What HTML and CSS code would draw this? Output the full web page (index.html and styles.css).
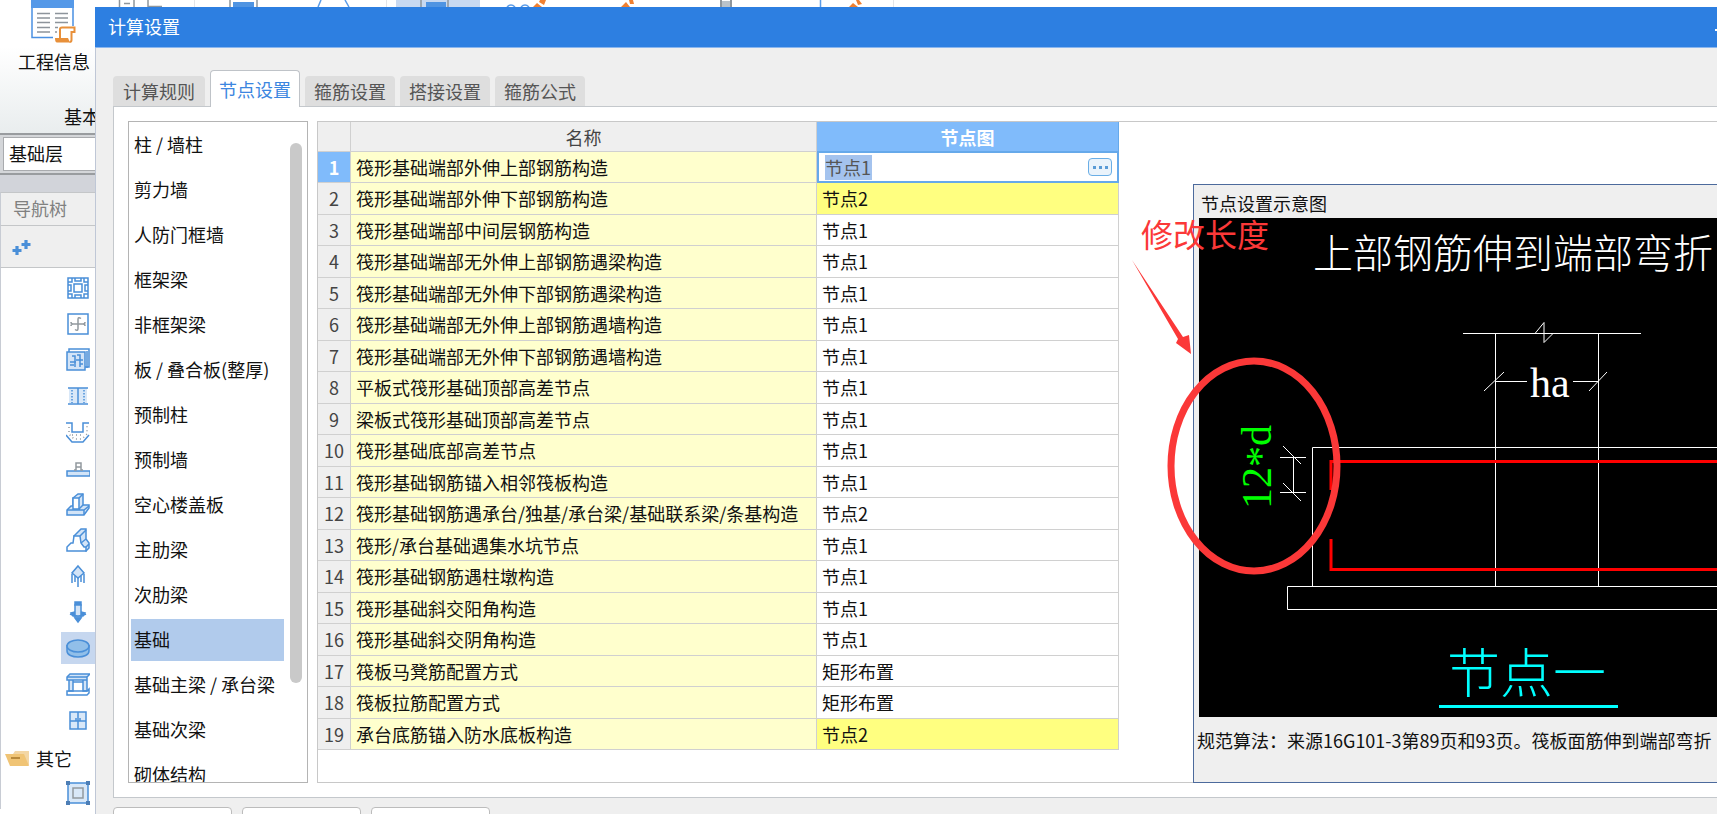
FILE: index.html
```html
<!DOCTYPE html>
<html lang="zh-CN">
<head>
<meta charset="utf-8">
<title>计算设置</title>
<link rel="stylesheet" href="styles.css">
</head>
<body>
<div class="app">
  <aside class="sidebar">
    <div class="ribbon">
      <button class="ribbon-btn" type="button">
        <svg width="46" height="44" viewBox="0 0 46 44" fill="none">
          <path d="M1 0V37.500H22M42 26V0" stroke="#4a90e2" stroke-width="1.500"/>
          <rect x="0" y="0" width="43" height="8" fill="#5599e8"/>
          <path d="M6 13.500h13M6 18h13M6 22.500h13M6 27.500h13M6 32h13M24 13.500h13M24 18h13M24 22.500h13M24 27.500h3M24 32h2" stroke="#8d949b" stroke-width="1.500"/>
          <path d="M29 39V29q0-1.500 2-1.500h12.500V32H40.500v8q0 2-2 2" stroke="#e8903a" stroke-width="2"/>
          <path d="M24 38h13l2 4.500H26q-2 0-2-4.500z" fill="#e8903a"/>
        </svg>
        <span>工程信息</span>
      </button>
      <div class="ribbon-group">基本</div>
    </div>
    <div class="floor-bar">
      <select class="floor-select" aria-label="楼层"><option>基础层</option></select>
    </div>
    <div class="spacer-bar"></div>
    <h2 class="nav-title">导航树</h2>
    <div class="nav-tools">
      <button class="plain" type="button" aria-label="展开">
        <svg width="20" height="18" viewBox="0 0 20 18"><path d="M5 7v9M0.500 11.500h9M14 1v9M9.500 5.500h9" stroke="#4a8fd8" stroke-width="3.200"/></svg>
      </button>
    </div>
    <nav class="tree" aria-label="构件">
      <button class="tree-item" type="button" aria-label="筏板"><svg class="ico" viewBox="0 0 24 24"><path d="M2 2h20v20H2zM8 8h8v8H8zM6 2v4H2M18 2v4h4M6 22v-4H2M18 22v-4h4M2 9h3v6H2M22 9h-3v6h3M9 2v3h6V2M9 22v-3h6v3"/></svg></button>
      <button class="tree-item" type="button" aria-label="筏板主筋"><svg class="ico" viewBox="0 0 24 24"><path d="M2 2h20v20H2z"/><path class="g" d="M15 6.500q-3-2-3 1v9q0 3-3 1M5 10q0 2 2 2h10q2 0 2 2M5 14q0-2 2-2M19 10q0 2-2 2"/></svg></button>
      <button class="tree-item" type="button" aria-label="筏板负筋"><svg class="ico" viewBox="0 0 24 24"><path class="f" d="M1 4h18v18H1z"/><path d="M3 4V1h20v18h-4M21 3v17M6 8h3v11M4 14h6M4 17h4M11 7h3v12M10 12h7M14 16h3"/></svg></button>
      <button class="tree-item" type="button" aria-label="基础板带"><svg class="ico" viewBox="0 0 24 24"><path class="f0" d="M3 4h18v15H3z"/><path d="M2 4h20M2 20h20M12 4v16"/><path stroke-dasharray="1.500 1.500" d="M6 6v13M18 6v13"/></svg></button>
      <button class="tree-item" type="button" aria-label="集水坑"><svg class="ico" viewBox="0 0 24 24"><path d="M0 3h6v9h11V3h6M0 15l6 7h11l6-7"/><path class="g" stroke-dasharray="1 3" d="M3 7v7l5 5h8l5-5V6M6 15h12"/></svg></button>
      <button class="tree-item" type="button" aria-label="柱墩"><svg class="ico" viewBox="0 0 24 24"><path class="f" d="M1 15h23v5H1z"/><path class="g" d="M8 14h2v-3h5v3h2M10 11V7h5v4"/></svg></button>
      <button class="tree-item" type="button" aria-label="独立基础"><svg class="ico" viewBox="0 0 24 24"><path class="f" d="M1 18l4-4h2V6l5-4h5v11h6v3l-5 7H1z"/><path class="w" d="M7 6h6v11H7z"/><path d="M1 18h17v5M18 18l5-4M13 6l4-4M13 17l4-4"/></svg></button>
      <button class="tree-item" type="button" aria-label="条形基础"><svg class="ico" viewBox="0 0 24 24"><path class="f" d="M8 8l7-7h5v10l3 4v5l-3 3z"/><path class="w" d="M1 23v-4l4-4h2l1-7h6l1 7 3 4h2v4z"/><path d="M14 8l6-6M15 15l5-4M20 19l3-3"/></svg></button>
      <button class="tree-item" type="button" aria-label="桩承台"><svg class="ico" viewBox="0 0 24 24"><path class="f" d="M12 2l6 7-6 5-6-5z"/><path d="M12 14v9M6 10v9M18 10v9M9 12v6M15 12v6"/></svg></button>
      <button class="tree-item" type="button" aria-label="桩"><svg class="ico" viewBox="0 0 24 24"><path class="s" d="M9 2h6v3H9zM5 13l4-1v4H7zM19 13l-4-1v4h2zM9 18h6l-3 4z"/><path class="f" d="M9 5h6v12H9z"/><path d="M4 14q8 4 16 0"/></svg></button>
      <button class="tree-item selected" type="button" aria-label="垫层"><svg class="ico" viewBox="0 0 24 24"><path class="d" d="M1 9v6c0 8 22 8 22 0V9"/><ellipse class="d" cx="12" cy="10" rx="11" ry="6"/></svg></button>
      <button class="tree-item" type="button" aria-label="地沟"><svg class="ico" viewBox="0 0 24 24"><path class="f" d="M1 5l3-3h20l-3 3v3H1zM3 8h4v11H3zM17 8h4v11h-4z"/><path d="M1 19h20l2-2v4l-2 2H1zM1 5h20M7 10h10"/></svg></button>
      <button class="tree-item" type="button" aria-label="砖胎膜"><svg class="ico" viewBox="0 0 24 24"><path class="f0" d="M4 4h16v17H4z"/><path d="M4 4h16v17H4zM12 4v17M4 13h16M10 10v3M14 10v3"/></svg></button>
      <div class="tree-folder">
        <svg width="26" height="20" viewBox="0 0 26 20"><path d="M8 6l2-3h14v14h-4z" fill="#f3d6a4"/><path d="M0 6h19l5 12H5z" fill="#f0c475"/><path d="M6 10h9" stroke="#b98a3c" stroke-width="2"/></svg>
        <span>其它</span>
      </div>
      <button class="tree-item" type="button" aria-label="建筑面积"><svg class="ico" viewBox="0 0 24 24"><path class="f0" d="M2 2h20v20H2z"/><path d="M2 2h20v20H2z"/><path class="g" d="M7 7h10v10H7z"/><path class="n" d="M0 0h4v4H0zM20 0h4v4h-4zM0 20h4v4H0zM20 20h4v4h-4z"/></svg></button>
    </nav>
  </aside>

  <div class="main">
    <svg class="strip" height="7" width="100%" fill="none" aria-hidden="true">
      <g stroke="#8f969c" stroke-width="1.500">
        <path d="M24.500 0v7M39 0v7M29 3.500h6M53 0v6.500h14M135 0v7M162 0v7"/>
      </g>
      <rect x="301" width="84" height="7" fill="#c8d9f1"/>
      <path d="M326 0v7M353 0v7" stroke="#8f969c" stroke-width="1.500"/>
      <path d="M138 2h21v5h-21zM331 2h20v5h-20z" fill="#4f94e2"/>
      <path d="M223 7l3-7M250 0l4 7M412 7q4-4 8 0M426 7q4-4 8 0M725.500 0v7" stroke="#5b9ce8" stroke-width="1.500"/>
      <path d="M99.500 0v7M291.500 0v7M798.500 0v7" stroke="#e3e5e8"/>
      <path d="M626 0v7M636 0v7" stroke="#8f969c" stroke-width="2"/><path d="M627 1h8v6h-8z" fill="#b9c2ca"/>
      <path d="M438 7l4-4 5 4zM445 0h6l-2 5-5-3zM526 7l5-5 4 5zM534 0h4l1 4-4 0zM754 7l4-4 5 4zM761 0h3l3 4-4 1z" fill="#f08030"/>
    </svg>

    <section class="dialog" aria-label="计算设置">
      <header class="titlebar"><h1>计算设置</h1><button class="minimize" type="button" aria-label="最小化"></button></header>
      <div class="tabs" role="tablist">
        <button class="tab first" role="tab" type="button">计算规则</button>
        <button class="tab active" role="tab" type="button" aria-selected="true">节点设置</button>
        <button class="tab" role="tab" type="button">箍筋设置</button>
        <button class="tab" role="tab" type="button">搭接设置</button>
        <button class="tab" role="tab" type="button">箍筋公式</button>
      </div>
      <div class="panel">
        <div class="category-box">
          <div class="categories">
            <button type="button">柱 / 墙柱</button>
            <button type="button">剪力墙</button>
            <button type="button">人防门框墙</button>
            <button type="button">框架梁</button>
            <button type="button">非框架梁</button>
            <button type="button">板 / 叠合板(整厚)</button>
            <button type="button">预制柱</button>
            <button type="button">预制墙</button>
            <button type="button">空心楼盖板</button>
            <button type="button">主肋梁</button>
            <button type="button">次肋梁</button>
            <button type="button" class="selected">基础</button>
            <button type="button">基础主梁 / 承台梁</button>
            <button type="button">基础次梁</button>
            <button type="button">砌体结构</button>
          </div>
          <div class="scroll-track"><div class="scroll-thumb"></div></div>
        </div>

        <div class="workspace">
          <table class="nodes">
            <colgroup><col class="c-num"><col class="c-name"><col class="c-node"></colgroup>
            <thead><tr><th></th><th>名称</th><th class="current">节点图</th></tr></thead>
            <tbody>
              <tr class="editing"><th>1</th><td>筏形基础端部外伸上部钢筋构造</td><td><div class="editor"><input value="节点1" aria-label="节点图"><button type="button" aria-label="选择节点"><i></i><i></i><i></i></button></div></td></tr>
              <tr class="changed"><th>2</th><td>筏形基础端部外伸下部钢筋构造</td><td>节点2</td></tr>
              <tr><th>3</th><td>筏形基础端部中间层钢筋构造</td><td>节点1</td></tr>
              <tr><th>4</th><td>筏形基础端部无外伸上部钢筋遇梁构造</td><td>节点1</td></tr>
              <tr><th>5</th><td>筏形基础端部无外伸下部钢筋遇梁构造</td><td>节点1</td></tr>
              <tr><th>6</th><td>筏形基础端部无外伸上部钢筋遇墙构造</td><td>节点1</td></tr>
              <tr><th>7</th><td>筏形基础端部无外伸下部钢筋遇墙构造</td><td>节点1</td></tr>
              <tr><th>8</th><td>平板式筏形基础顶部高差节点</td><td>节点1</td></tr>
              <tr><th>9</th><td>梁板式筏形基础顶部高差节点</td><td>节点1</td></tr>
              <tr><th>10</th><td>筏形基础底部高差节点</td><td>节点1</td></tr>
              <tr><th>11</th><td>筏形基础钢筋锚入相邻筏板构造</td><td>节点1</td></tr>
              <tr><th>12</th><td>筏形基础钢筋遇承台/独基/承台梁/基础联系梁/条基构造</td><td>节点2</td></tr>
              <tr><th>13</th><td>筏形/承台基础遇集水坑节点</td><td>节点1</td></tr>
              <tr><th>14</th><td>筏形基础钢筋遇柱墩构造</td><td>节点1</td></tr>
              <tr><th>15</th><td>筏形基础斜交阳角构造</td><td>节点1</td></tr>
              <tr><th>16</th><td>筏形基础斜交阴角构造</td><td>节点1</td></tr>
              <tr><th>17</th><td>筏板马凳筋配置方式</td><td>矩形布置</td></tr>
              <tr><th>18</th><td>筏板拉筋配置方式</td><td>矩形布置</td></tr>
              <tr class="changed"><th>19</th><td>承台底筋锚入防水底板构造</td><td>节点2</td></tr>
            </tbody>
          </table>

          <section class="preview">
            <h2>节点设置示意图</h2>
            <svg class="drawing" fill="none">
              <text class="cad title" x="114" y="50">上部钢筋伸到端部弯折</text>
              <g stroke="#fff" stroke-width="1">
                <path d="M264 115.500H442M336 115.500l9-11v20l9-9M296.500 115v253M399.500 115v253"/>
                <path d="M296 163.500h32M374 163.500h26M285 173l20-19M390 173l18-19"/>
                <path d="M2000 229.500H113.500V368M2000 368.500H88.500v23H2000"/>
                <path d="M81 239.500h26M81 274.500h26M94.500 239v36M84 228l18 18M84 265l18 18"/>
              </g>
              <path d="M132 272V243.500H2000M132 321v30.500H2000" stroke="#f00" stroke-width="3"/>
              <text class="cad dim" x="331" y="179">ha</text>
              <text class="cad green" transform="translate(72 291) rotate(-90)">12<tspan dy="4">*</tspan><tspan dy="-4">d</tspan></text>
              <text class="cad name" x="248" y="475">节点一</text>
              <path d="M240 488.500h179" stroke="#0ff" stroke-width="3"/>
            </svg>
            <p>规范算法：来源16G101-3第89页和93页。筏板面筋伸到端部弯折</p>
          </section>
        </div>
      </div>
      <footer class="actions">
        <button type="button" aria-label="导入规则"></button>
        <button type="button" aria-label="导出规则"></button>
        <button type="button" aria-label="恢复默认"></button>
      </footer>
    </section>
  </div>

  <svg class="markup" width="220" height="380" viewBox="0 0 220 380" fill="none">
    <text x="11" y="47">修改长度</text>
    <path d="M2 60L53 137 59 135 61 154 46 143 48 139z" fill="#fb3838"/>
    <ellipse cx="124" cy="266" rx="83" ry="105" stroke="#fb3838" stroke-width="7"/>
  </svg>
</div>
</body>
</html>
```

FILE: styles.css
```css
* { box-sizing: border-box; }
body {
  margin: 0;
  overflow: hidden;
  font: 18px/24px "Noto Sans CJK SC", sans-serif;
  color: #111;
  background: #fff;
}
button, input, select { font: inherit; color: inherit; margin: 0; }
h1, h2, p { margin: 0; font-size: inherit; font-weight: 400; }
.app { position: relative; display: flex; height: 100vh; overflow: hidden; }

/* sidebar */
.sidebar { flex: 0 0 95px; overflow: hidden; background: #fff; white-space: nowrap; }
.ribbon { height: 133px; background: linear-gradient(#fff 35%, #e9edee); overflow: hidden; }
.ribbon-btn {
  display: flex; flex-direction: column; align-items: center; gap: 5px;
  width: 108px; padding: 0; border: 0; background: none;
}
.ribbon-group { padding: 31px 0 0 64px; }
.floor-bar {
  padding: 2px 0 2px 3px; background: #d4d6d9;
  border-top: 2px solid #999c9f; border-bottom: 2px solid #999c9f;
}
.floor-select {
  appearance: none; display: block; width: 150px; height: 34px; padding: 0 5px 2px;
  border: 1px solid #a9abae; border-radius: 0; background: #fff;
}
.spacer-bar { height: 17px; background: #d2d4da; }
.nav-title, .nav-tools { border-top: 1px solid #c4c6c8; border-left: 1px solid #c8ccd4; background: #efefef; }
.nav-title { height: 33px; padding: 3px 12px; color: #808080; }
.nav-tools { height: 43px; padding: 13px 11px; border-bottom: 1px solid #c4c6c8; }
.plain { display: block; padding: 0; border: 0; background: none; }
.plain svg { display: block; }
.tree { padding-top: 2px; border-left: 1px solid #c8ccd4; }
.tree-item {
  display: flex; align-items: center; justify-content: center;
  width: 34px; height: 32px; margin: 2px 0 4px 60px; padding: 0; border: 0; background: none;
}
.tree-item.selected { background: #c6d7ef; }
.tree-folder { display: flex; align-items: center; gap: 5px; height: 35px; padding-left: 4px; }
.ico { width: 24px; height: 24px; fill: none; stroke: #4a8fd8; stroke-width: 1.5; }
.ico .f { fill: #d3e4f7; }
.ico .f0 { fill: #d9e8f8; stroke: none; }
.ico .w { fill: #fff; }
.ico .d { fill: #91bfe9; }
.ico .s { fill: #4a8fd8; }
.ico .g { stroke: #92999f; }
.ico .n { fill: #4d7eb5; stroke: none; }

/* main */
.main { flex: 1; min-width: 0; display: flex; flex-direction: column; }
.strip { display: block; flex: none; }
.dialog {
  flex: 1; min-height: 0; display: flex; flex-direction: column;
  background: #efefef; border-left: 1px solid #bfc7d6;
}
.titlebar {
  display: flex; align-items: center; justify-content: space-between; height: 41px; margin-left: -1px;
  padding: 0 0 2px 13px; background: #2d7fe1; color: #fff; border-bottom: 1px solid #8ab6ee;
}
.minimize { width: 2px; height: 2px; padding: 0; border: 0; background: #fff; margin-top: 8px; }
.tabs { display: flex; align-items: flex-end; gap: 5px; height: 58px; padding-left: 17px; }
.tab {
  height: 30px; width: 90px; padding: 0; border: 0; border-radius: 4px 4px 0 0;
  background: #dedede; color: #555;
}
.tab.first { width: 92px; }
.tab.active {
  position: relative; z-index: 1; height: 37px; margin-bottom: -1px;
  border: 1px solid #bfc3c8; border-bottom: 0; background: #fff; color: #3b86e0;
}
.panel {
  flex: 1; min-height: 0; display: flex; gap: 9px; margin-left: 17px; padding: 14px 0 14px 14px;
  border: 1px solid #c4c8cc; border-right: 0; background: #fff;
}
.category-box { display: flex; flex: 0 0 180px; padding-left: 2px; border: 1px solid #b4b4b4; overflow: hidden; }
.categories { flex: 0 0 153px; padding-top: 2px; }
.categories button {
  display: block; width: 100%; height: 42px; margin-bottom: 3px; padding: 0 3px 2px;
  border: 0; background: none; text-align: left; white-space: nowrap; overflow: visible;
}
.categories .selected { background: #b1cbec; }
.scroll-track { margin-left: 6px; padding-top: 21px; }
.scroll-thumb { width: 12px; height: 540px; border-radius: 6px; background: #c9c9c9; }

.workspace { flex: 1; min-width: 0; display: flex; align-items: flex-start; border: 1px solid #c8c8c8; border-right: 0; }
.nodes { flex: none; width: 801px; table-layout: fixed; border-collapse: separate; border-spacing: 0; }
.c-num { width: 33px; }
.c-name { width: 466px; }
.c-node { width: 302px; }
.nodes th, .nodes td {
  height: 32px; padding: 0 5px; line-height: 24px; white-space: nowrap; text-align: left;
  border-right: 1px solid #d0d0d0; border-bottom: 1px solid #d0d0d0;
}
.nodes tbody tr:nth-child(odd) > * { height: 31px; }
.nodes tbody tr:nth-child(even) > * { padding-bottom: 1px; }
.nodes th { background: #efefef; color: #444; font-weight: 400; text-align: center; padding: 0; }
.nodes thead th { height: 30px; }
.nodes thead .current { background: #80bbfb; color: #fff; font-weight: 700; border-color: #66a9ea; }
.nodes td:nth-child(2) { background: #ffffcd; }
.nodes .changed td:nth-child(3) { background: #ffff80; }
.nodes .editing th { background: #80bbfb; color: #fff; font-weight: 700; }
.nodes .editing td:nth-child(3) { padding: 0; border: 0; }
.editor {
  display: flex; align-items: center; justify-content: space-between; height: 31px;
  padding: 0 5px 0 6px; border: 2px solid #66a9ea; border-top-width: 1px;
}
.editor input { width: 47px; height: 25px; padding: 0; border: 0; background: #a4c3ee; color: #555; }
.editor button {
  display: flex; align-items: center; justify-content: center; gap: 3px; width: 24px; height: 18px; padding: 0;
  border: 1px solid #6aaee6; border-radius: 4px; background: #eaf3fb;
}
.editor i { width: 3px; height: 3px; background: #5a9bd6; }

.preview {
  flex: 1; min-width: 0; align-self: stretch; margin: 62px 0 -1px 74px; overflow: hidden;
  background: #efefef; border: 1px solid #4c6a9c; border-right: 0;
}
.preview h2 { height: 33px; padding: 6px 7px 0; }
.drawing { display: block; width: calc(100% - 5px); height: 499px; margin-left: 5px; background: #000; }
.preview p { padding: 11px 3px; white-space: nowrap; }
.cad { font-family: "Liberation Serif", "Noto Sans CJK SC", serif; font-weight: 300; fill: #fff; }
.cad.title { font-size: 40px; }
.cad.dim { font-size: 42px; }
.cad.green { font-size: 42px; fill: #0f0; }
.cad.name { font-size: 53px; fill: #0ff; }

.actions { flex: 0 0 16px; display: flex; gap: 10px; padding: 9px 0 0 17px; overflow: hidden; }
.actions button { width: 119px; height: 30px; border: 1px solid #bcbcbc; border-radius: 4px; background: #fff; }

/* hand-drawn note over the dialog */
.markup { position: absolute; left: 1130px; top: 200px; pointer-events: none; }
.markup text { font-size: 32px; fill: #fb3838; }
```
